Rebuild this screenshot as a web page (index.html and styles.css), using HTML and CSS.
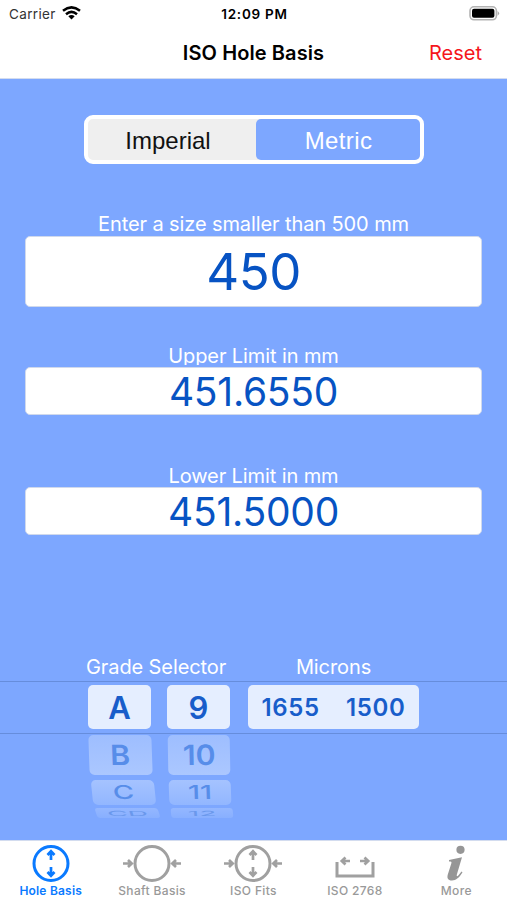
FILE: index.html
```html
<!DOCTYPE html>
<html lang="en">
<head>
<meta charset="utf-8">
<title>ISO Hole Basis</title>
<link rel="stylesheet" href="styles.css">
</head>
<body>
<div class="app">
  <header class="header">
    <div class="status">
      <div class="carrier"><span>Carrier</span>
        <svg width="19" height="14" viewBox="0 0 19 14" fill="none" stroke="#000" stroke-width="2.5"><path d="M1 4.800Q9.500 -2 18 4.800M4 8.200Q9.500 3.600 15 8.200"/><path d="M6.300 10.300Q9.500 7.700 12.700 10.300L9.500 13.500Z" fill="#000" stroke="none"/></svg>
      </div>
      <span class="clock">12:09 PM</span>
      <svg class="battery" width="31" height="15" viewBox="0 0 31 15"><rect x="1" y=".8" width="26.400" height="13" rx="4" fill="#fff" stroke="#b3b3b3" stroke-width="1.600"/><rect x="3" y="2.800" width="22.400" height="9" rx="2" fill="#000"/><path d="M28.600 5Q31.600 7.300 28.600 9.700Z" fill="#aaa"/></svg>
    </div>
    <div class="nav"><span></span><h1>ISO Hole Basis</h1><a class="reset">Reset</a></div>
  </header>
  <main class="main">
    <div class="segments"><span class="seg imperial">Imperial</span><span class="seg metric">Metric</span></div>
    <section class="field size"><label class="enter">Enter a size smaller than 500 mm</label><div class="box">450</div></section>
    <section class="field limit upper"><label>Upper Limit in mm</label><div class="box">451.6550</div></section>
    <section class="field limit lower"><label>Lower Limit in mm</label><div class="box">451.5000</div></section>
    <div class="picker-labels"><span class="grade-label">Grade Selector</span><span class="micron-label">Microns</span></div>
    <div class="picker">
      <div class="band">
        <div class="cell selected">A</div>
        <div class="cell selected">9</div>
        <div class="cell selected microns"><span>1655</span><span>1500</span></div>
      </div>
      <div class="wheels">
        <div class="wheel letters">
          <div class="cell next n1"><span>B</span></div><div class="cell next n2"><span>C</span></div><div class="cell next n3"><span>CD</span></div>
        </div>
        <div class="wheel numbers">
          <div class="cell next n1"><span>10</span></div><div class="cell next n2"><span>11</span></div><div class="cell next n3"><span>12</span></div>
        </div>
      </div>
    </div>
  </main>
  <nav class="tabs">
    <a class="tab active"><svg width="64" height="40" viewBox="0 0 64 40"><circle cx="32" cy="20.500" r="17"/><path d="M32 17V8M28.500 12L32 8.300L35.500 12M32 24V33M28.500 29L32 32.700L35.500 29"/></svg><span>Hole Basis</span></a>
    <a class="tab"><svg width="64" height="40" viewBox="0 0 64 40"><circle cx="32" cy="20.500" r="17"/><path d="M3 20.500H11M8 17L11.700 20.500L8 24M61 20.500H53M56 17L52.300 20.500L56 24"/></svg><span>Shaft Basis</span></a>
    <a class="tab"><svg width="64" height="40" viewBox="0 0 64 40"><circle cx="32" cy="20.500" r="17"/><path d="M32 17V8M28.500 12L32 8.300L35.500 12M32 24V33M28.500 29L32 32.700L35.500 29M3 20.500H11M8 17L11.700 20.500L8 24M61 20.500H53M56 17L52.300 20.500L56 24"/></svg><span>ISO Fits</span></a>
    <a class="tab"><svg width="64" height="40" viewBox="0 0 64 40"><path class="tray" d="M14 19V33H50V19"/><path d="M27 18H19M22.500 14.500L18.800 18L22.500 21.500M37 18H45M41.500 14.500L45.200 18L41.500 21.500"/></svg><span>ISO 2768</span></a>
    <a class="tab"><svg width="64" height="40" viewBox="0 0 64 40"><circle class="solid" cx="36.500" cy="6.800" r="4.100"/><path class="solid" d="M25 17L38 14.300L33 31C32.300 33.200 33 33.800 34.300 32.500L37.500 28.500L38.500 29.300C35.500 34.500 32 37.500 28 37.500C23.800 37.500 22.800 35 23.800 31.500L27.300 20.500C28 18.500 27 18.500 25 18.500Z"/></svg><span>More</span></a>
  </nav>
</div>
</body>
</html>
```
FILE: styles.css
```css
* { box-sizing: border-box; }
body { margin: 0; font-family: Inter, "Liberation Sans", sans-serif; }
.app { width: 507px; height: 900px; display: flex; flex-direction: column; overflow: hidden; background: #7da7ff; }
.header { height: 79px; background: #fff; border-bottom: 1px solid #d3dcef; }
.status { height: 27px; padding: 0 7px 0 9px; display: grid; grid-template-columns: 1fr auto 1fr; align-items: center; font-size: 13.5px; }
.carrier { display: flex; align-items: center; gap: 7px; color: #333; letter-spacing: .35px; }
.carrier svg { margin-left: -1px; margin-top: -2px; }
.clock { font-weight: 600; font-size: 13.5px; letter-spacing: .75px; }
.battery { justify-self: end; margin-top: -1px; }
.nav { height: 51px; display: grid; grid-template-columns: 1fr auto 1fr; align-items: center; padding: 0 25px; }
h1 { margin: 0; font-size: 20px; font-weight: 600; letter-spacing: .1px; }
.reset { justify-self: end; color: #f5161c; font-size: 20px; }
.main { height: 761px; display: flex; flex-direction: column; color: #fff; }
.segments { width: 340px; height: 49px; margin: 36px 0 0 84px; border: 4px solid #fff; border-radius: 9px; background: #efefef; display: flex; font: 24px/43px "Liberation Sans", sans-serif; text-align: center; }
.imperial { width: 168px; padding-right: 8px; color: #111; }
.metric { width: 164px; padding-left: 1px; letter-spacing: .4px; background: #7da7ff; border-radius: 5px; }
.field { margin: 0 25px; }
.field label { display: block; height: 24px; line-height: 24px; font-size: 20px; letter-spacing: -.1px; text-align: center; overflow: hidden; white-space: nowrap; }
.box { border: 1px solid #d0d9ec; border-radius: 5px; background: #fff; color: #0753c3; text-align: center; }
.size { margin-top: 48px; }
.size .box { height: 71px; font-size: 51px; line-height: 69px; letter-spacing: -.5px; }
.limit .box { height: 48px; font-size: 39px; line-height: 47px; letter-spacing: -.25px; }
.upper { margin-top: 36px; }
.upper label { height: 22px; line-height: 26px; margin-bottom: 2px; }
.lower { margin-top: 48px; }
.lower label { line-height: 26px; }
.picker-labels { margin-top: 119px; height: 27px; display: flex; line-height: 26px; font-size: 20px; letter-spacing: -.1px; white-space: nowrap; }
.grade-label { width: 248px; padding-left: 86px; }
.micron-label { width: 171px; text-align: center; }
.picker { height: 159px; }
.band { height: 53px; border-top: 1px solid #668ddc; border-bottom: 1px solid #668ddc; padding: 3px 0 0 88px; display: flex; }
.cell { width: 63px; height: 44px; border-radius: 5px; background: #e5eeff; color: #185dca; text-align: center; font-size: 31px; line-height: 45px; font-weight: 600; }
.band .cell + .cell { margin-left: 16px; }
.band .cell.microns { width: 171px; margin-left: 18px; display: flex; justify-content: center; gap: 26px; font-size: 24px; letter-spacing: .7px; line-height: 46px; }
.wheels { padding: 1px 0 0 89px; display: flex; gap: 15px; }
.wheel { width: 64px; display: flex; flex-direction: column; }
.next { display: flex; align-items: center; justify-content: center; color: #578de9; background: linear-gradient(#9ebeff, #abc7ff); }
.n1 { height: 40px; font-size: 28px; }
.n1 span { transform: scaleX(1.08); }
.n2 { height: 25px; margin-top: 5px; font-size: 29px; font-weight: 500; background: linear-gradient(#a5c3ff, #92b6ff); }
.n2 span { transform: scaleY(.66); }
.n3 { height: 10px; margin-top: 3px; font-size: 28px; font-weight: 400; background: linear-gradient(#94b7ff, #88afff); color: #6a98ec; border-radius: 3px; }
.n3 span { transform: scaleY(.25); }
.letters .n1 { transform: skewX(2deg); }
.letters .n2 { transform: translateX(3px) skewX(6deg); }
.letters .n3 { transform: translateX(7px) skewX(18deg); }
.numbers .n1 { transform: skewX(1deg); }
.numbers .n2 { transform: translateX(1px) skewX(2deg); }
.numbers .n3 { transform: translateX(3px) skewX(5deg); }
.numbers .cell { width: 62px; }
.tabs { height: 60px; background: #fff; border-top: 1px solid #d3dcef; display: grid; grid-template-columns: repeat(5, 1fr); color: #999; }
.tab { display: flex; flex-direction: column; align-items: center; padding-top: 2px; font-size: 12px; font-weight: 500; line-height: 15px; letter-spacing: .35px; white-space: nowrap; }
.tab svg { fill: none; stroke: #a0a0a0; stroke-width: 2.7; }
.tab circle { stroke-width: 3; }
.tab .solid { fill: #969696; stroke: none; }
.tab .tray { stroke-width: 3; }
.active { color: #0a7aff; font-weight: 600; letter-spacing: .2px; }
.tab.active svg { stroke: #0a7aff; }
```
